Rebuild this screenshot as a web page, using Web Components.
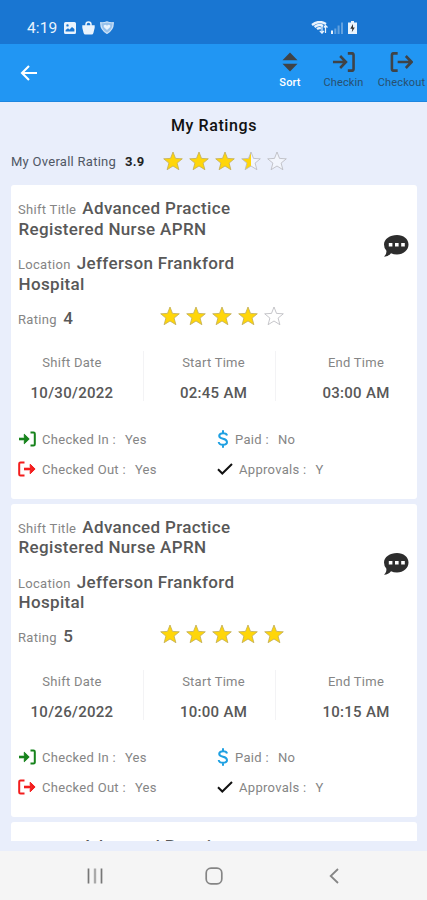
<!DOCTYPE html>
<html lang="en">
<head>
<meta charset="utf-8">
<title>My Ratings</title>
<style>
body{margin:0;font-family:Roboto,"Liberation Sans",sans-serif}
</style>
</head>
<body>
<ratings-app></ratings-app>
<script>
const ICONS = {
  back: ['0 0 18 18', '<path d="M17 9H2.5M9 2 2 9l7 7" fill="none" stroke="currentColor" stroke-width="2.1"/>'],
  image: ['0 0 12 12', '<path fill="currentColor" fill-rule="evenodd" d="M1.5 0h9Q12 0 12 1.500v9q0 1.500-1.500 1.500h-9Q0 12 0 10.500v-9Q0 0 1.500 0ZM1.600 9.600h8.800V7L8 5 5.500 7.600 4 6.200 1.600 8ZM3.500 2.200a1.200 1.200 0 1 0 0 2.400 1.200 1.200 0 0 0 0-2.400Z"/>'],
  bag: ['0 0 13 14', '<path d="M4 5V3.500Q4 1 6.500 1T9 3.500V5" fill="none" stroke="currentColor" stroke-width="1.500"/><path d="M.3 4.300h12.400v2.500L11.400 12q-.3 1.500-1.800 1.500H3.400Q2 13.500 1.600 12L.3 6.800Z" fill="currentColor"/>'],
  shield: ['0 0 14 14', '<path d="M7 .8Q10 2.200 13.300 1.800 13.600 9.500 7 13.400.4 9.500.7 1.800 4 2.200 7 .8Z" fill="currentColor" fill-opacity=".6" stroke="currentColor" stroke-opacity=".8" stroke-width="1.200"/><path d="M7 9.800 3.800 6.500Q3 4.500 5 4q1.300 0 2 1.200Q7.700 4 9 4q2 .5 1.200 2.500Z" fill="currentColor"/>'],
  wifi: ['0 0 17 13', '<path d="M1 4Q8-1.500 15 3M3.500 6Q8 2.500 12 5M6 8.200Q8 6.500 10 7.500" fill="none" stroke="currentColor" stroke-width="2.300"/><path d="M11 12V5M8.800 9.800l2.200 2.400 2-2.400M14.500 12V4.500M12.800 6.500l1.700-2 2 2" fill="none" stroke="currentColor" stroke-width="1.200"/>'],
  signal: ['0 0 12 12', '<path d="M0 8.500h2V12H0Z" fill="currentColor"/><path d="M3.300 6.500h2V12h-2ZM6.600 3.500h2V12h-2ZM10 .5h2V12h-2Z" fill="currentColor" fill-opacity=".35"/>'],
  battery: ['0 0 9 13', '<path d="M3 0h3v1.500h3V13H0V1.500h3Z" fill="currentColor"/><path d="M5 3 2.300 7.800h2L3.800 11.200l3-4.700H5Z" fill="#333"/>'],
  sort: ['0 0 16 20', '<path d="M8 .5 15.500 8.300H.5ZM8 19.500.5 11.700h15Z" fill="currentColor"/>'],
  enter: ['0 0 24 20', '<path d="M1 10h13M8.500 4l6 6-6 6M16.500 1.300h4q2 0 2 2v13.400q0 2-2 2h-4" fill="none" stroke="currentColor" stroke-width="2.700"/>'],
  exit: ['0 0 24 20', '<path d="M8 10h14M16.500 4l6 6-6 6M8 1.300H4q-2 0-2 2v13.400q0 2 2 2h4" fill="none" stroke="currentColor" stroke-width="2.700"/>'],
  enterSmall: ['0 0 18 16', '<path d="M1 8h6" stroke="currentColor" stroke-width="2.600"/><path d="M6.300 3.200 11.200 8l-4.900 4.800V9.600L8 8 6.300 6.400Z" fill="currentColor" stroke="currentColor"/><path d="M12.500 1.500h3q1.300 0 1.300 1.300v10.400q0 1.300-1.300 1.300h-3" fill="none" stroke="currentColor" stroke-width="2"/>'],
  exitSmall: ['0 0 18 16', '<path d="M6 8h7" stroke="currentColor" stroke-width="2.600"/><path d="M12.200 3.200 17.100 8l-4.900 4.800V9.600L13.900 8 12.200 6.400Z" fill="currentColor" stroke="currentColor"/><path d="M6.500 1.500h-4q-1.300 0-1.300 1.300v10.400q0 1.300 1.300 1.300h4" fill="none" stroke="currentColor" stroke-width="2"/>'],
  chat: ['0 0 26 24', '<path d="M14 1C20.500 1 25.500 5 25.500 10.500S20.500 20.500 14 20.500q-3.500 0-6-1.300-2.500 3.300-7 3.500 3-3 2.300-6.200Q1 14 1 10.500C1 5 7 1 14 1Z" fill="currentColor"/><path d="M5.800 9h3.600v3.600H5.800ZM12 9h3.600v3.600H12ZM18.200 9h3.600v3.600h-3.600Z" fill="#fff"/>'],
  dollar: ['0 0 12 18', '<path d="M10 5.500Q9.600 3.200 6 3.200T2.200 5.800Q2.200 8 6 8.800T10 12q0 2.800-4 2.800T1.700 12M6 .3v3M6 14.500v3.200" fill="none" stroke="currentColor" stroke-width="2"/>'],
  check: ['0 0 16 12', '<path d="m1 6.300 4.300 4.200L15 1" fill="none" stroke="currentColor" stroke-width="2"/>'],
  recents: ['0 0 16 16', '<path d="M1.500 .5v15M14.500 .5v15" fill="none" stroke="#777" stroke-width="1.700"/><path d="M8 .5v15" stroke="#aaa" stroke-width="2.400"/>'],
  home: ['0 0 18 18', '<rect x="1.200" y="1.200" width="15.600" height="15.600" rx="4.800" fill="none" stroke="currentColor" stroke-width="1.700"/>'],
  prev: ['0 0 10 16', '<path d="M9 1 1.700 8 9 15" fill="none" stroke="currentColor" stroke-width="1.800"/>']
};
const define = (name, html, render) => customElements.define(name, class extends HTMLElement {
  constructor() {
    super();
    const t = document.createElement('template');
    t.innerHTML = html;
    this.attachShadow({mode: 'open'}).append(t.content.cloneNode(true));
  }
  connectedCallback() { if (render) render(this, this.shadowRoot); }
});

define('ui-icon', `<style>:host{display:block;flex:none}svg{display:block;width:100%;height:100%}</style><svg preserveAspectRatio="none"></svg>`, (el, root) => {
  const [box, body] = ICONS[el.getAttribute('name')];
  const svg = root.querySelector('svg');
  svg.setAttribute('viewBox', box);
  svg.innerHTML = body;
});

define('star-rating', `<style>:host{display:flex;gap:6px}svg{display:block;width:20px;height:20px}</style>`, (el, root) => {
  const value = Number(el.getAttribute('value'));
  const star = 'M10 1 12.500 7.400 19.300 7.800 14.100 12.100 15.900 18.700 10 15 4.100 18.700 5.900 12.100 .7 7.800 7.500 7.400Z';
  for (let i = 0; i < 5; i++) {
    const part = Math.max(0, Math.min(1, value - i));
    root.innerHTML += `<svg viewBox="0 0 20 20"><defs><clipPath id="c${i}"><rect width="${part * 20}" height="20"/></clipPath></defs><path d="${star}" fill="#fff" fill-opacity=".4"/><path d="${star}" fill="#ffd60a" clip-path="url(#c${i})"/><path d="${star}" fill="none" stroke="${part === 1 ? '#c0ac55' : '#b8b8bc'}" stroke-width=".8"/></svg>`;
  }
});

define('status-bar', `<style>
:host{display:flex;align-items:center;box-sizing:border-box;height:44px;padding:11px 70px 0 27px;background:#1976d2;color:#e9f3fd}
.time{font-size:15.500px;width:37px;letter-spacing:.1px}
.grow{flex:1}
.i1{width:12px;height:12px}.i2{width:13px;height:14px;margin-left:6px}.i3{width:14px;height:13px;margin-left:5px}
.w{width:17px;height:13px}.s{width:12px;height:12px;margin:0 5px 0 3px}.b{width:9px;height:13px}
</style><span class="time">4:19</span><ui-icon class="i1" name="image"></ui-icon><ui-icon class="i2" name="bag"></ui-icon><ui-icon class="i3" name="shield"></ui-icon><span class="grow"></span><ui-icon class="w" name="wifi"></ui-icon><ui-icon class="s" name="signal"></ui-icon><ui-icon class="b" name="battery"></ui-icon>`);

define('bar-action', `<style>
:host{display:flex;flex-direction:column;align-items:center;color:#3f4347;padding-top:8px;width:54px}
.box{height:20px}
.label{font-size:11px;line-height:14px;margin-top:4px;color:var(--label,#28506f);white-space:nowrap;letter-spacing:.15px;font-weight:var(--w,400)}
</style><div class="box"><slot name="icon"></slot></div><span class="label"><slot></slot></span>`);

define('app-bar', `<style>
:host{display:flex;justify-content:space-between;box-sizing:border-box;height:58px;padding-left:20px;background:#2196f3;border-bottom:1px solid #1c86e0;color:#fff}
.back{width:18px;height:18px;margin-top:20px}
.actions{display:flex;margin-right:-1.500px}
.sort{width:16px;height:20px}.arrow{width:23px;height:20px}
.a{--label:#fff;--w:500;margin-right:-.5px}.c{margin-right:4px}
</style><ui-icon class="back" name="back"></ui-icon><div class="actions">
<bar-action class="a">Sort<ui-icon slot="icon" class="sort" name="sort"></ui-icon></bar-action>
<bar-action class="c">Checkin<ui-icon slot="icon" class="arrow" name="enter"></ui-icon></bar-action>
<bar-action>Checkout<ui-icon slot="icon" class="arrow" name="exit"></ui-icon></bar-action></div>`);

define('time-cell', `<style>
:host{display:flex;flex-direction:column;align-items:center;box-sizing:border-box;height:50px}
.k{font-size:13px;line-height:16px;margin-top:4px;color:#858585;letter-spacing:.25px}
.v{font-size:15px;line-height:18px;margin-top:13px;color:#585858;font-weight:500;letter-spacing:.3px;white-space:nowrap}
</style><span class="k"><slot name="key"></slot></span><span class="v"><slot></slot></span>`);

define('check-item', `<style>
:host{display:flex;align-items:center;height:20px;font-size:13px;color:#858585;letter-spacing:.3px;white-space:nowrap}
.text{padding-top:1px}.v{margin-left:9px}
</style><slot name="icon"></slot><span class="text"><slot></slot><span class="v"><slot name="value"></slot></span></span>`);

define('shift-card', `<style>
:host{display:block;box-sizing:border-box;height:313.500px;margin-bottom:5px;padding:15px 7px 0;background:#fff;border-radius:3px;color:#858585}
.top{display:grid;grid-template-columns:1fr 27px;align-items:center;height:96px}
p{margin:0;width:235px;font-size:13px;line-height:20.500px;letter-spacing:.3px;white-space:nowrap}
p+p{margin-top:14px}
b{font-size:17px;line-height:1;font-weight:500;color:#585858;letter-spacing:.35px;margin-left:2.500px}
b.next{margin-left:.5px}
.chat{width:26px;height:24px;margin-top:-5px}
.rate{display:flex;align-items:center;height:24px;margin-top:10px;font-size:13px;letter-spacing:.3px}
.rate .k{width:142px}
.rate b{margin-left:3px}
.rate star-rating{margin-top:-5px}
.times{display:grid;grid-template-columns:125px 132px 1fr;margin-top:21.400px}
.times>*+*{border-left:1px solid #f3f3f5}
.d1{padding-right:17px}.d2{padding-left:8px}.d3{padding-left:26px}
.checks{display:grid;grid-template-columns:199px 1fr;row-gap:10px;margin-top:27.200px}
.in,.out{width:18px;height:16px;margin-right:6px}
.in{color:#17831c}.out{color:#f31d1d}
.paid{width:12px;height:18px;margin-right:6px;color:#1ea0e2}
.ok{width:16px;height:12px;margin-right:6px;color:#111}
</style>
<div class="top"><div><p>Shift Title <b>Advanced Practice</b><br><b class="next">Registered Nurse APRN</b></p><p>Location <b>Jefferson Frankford</b><br><b class="next">Hospital</b></p></div><ui-icon class="chat" name="chat" style="color:#2d2d2d"></ui-icon></div>
<div class="rate"><span class="k">Rating <b id="r"></b></span><star-rating id="s"></star-rating></div>
<div class="times"><time-cell class="d1"><span slot="key">Shift Date</span><slot name="date"></slot></time-cell><time-cell class="d2"><span slot="key">Start Time</span><slot name="start"></slot></time-cell><time-cell class="d3"><span slot="key">End Time</span><slot name="end"></slot></time-cell></div>
<div class="checks">
<check-item><ui-icon slot="icon" class="in" name="enterSmall"></ui-icon>Checked In :<span slot="value">Yes</span></check-item>
<check-item><ui-icon slot="icon" class="paid" name="dollar"></ui-icon>Paid :<span slot="value">No</span></check-item>
<check-item><ui-icon slot="icon" class="out" name="exitSmall"></ui-icon>Checked Out :<span slot="value">Yes</span></check-item>
<check-item><ui-icon slot="icon" class="ok" name="check"></ui-icon>Approvals :<span slot="value">Y</span></check-item>
</div>`, (el, root) => {
  root.getElementById('r').textContent = el.getAttribute('rating');
  const s = document.createElement('star-rating');
  s.setAttribute('value', el.getAttribute('rating'));
  root.getElementById('s').replaceWith(s);
});

define('card-peek', `<style>
:host{display:block;height:19px;overflow:hidden;background:#fff;border-radius:3px 3px 0 0;padding:0 7px}
p{margin:14px 0 0;font-size:17px;font-weight:500;line-height:20.500px;letter-spacing:.35px;color:#585858;padding-left:64px}
</style><p>Advanced Practice</p>`);

define('nav-bar', `<style>
:host{display:flex;align-items:center;justify-content:space-between;box-sizing:border-box;height:49px;padding:0 88px 0 87px;background:#f5f5f5;color:#858585}
.r{width:16px;height:16px}.h{width:18px;height:18px;margin-right:4px}.p{width:10px;height:16px}
</style><ui-icon class="r" name="recents"></ui-icon><ui-icon class="h" name="home"></ui-icon><ui-icon class="p" name="prev"></ui-icon>`);

define('ratings-app', `<style>
:host{display:flex;flex-direction:column;height:900px;overflow:hidden;background:#e9eefb}
h1{margin:14px 0 0;font-size:16px;line-height:20px;font-weight:500;letter-spacing:.6px;text-indent:1px;text-align:center;color:#111}
.overall{display:flex;align-items:center;height:22px;margin:14px 11px 0;font-size:13px;color:#505764}
.overall .k{width:114px;letter-spacing:.27px}.overall b{font-weight:700;color:#222;width:37.500px;letter-spacing:.3px}
main{height:656px;overflow:hidden;margin:13px 10px 10px 11px}
</style>
<status-bar></status-bar><app-bar></app-bar>
<h1>My Ratings</h1>
<div class="overall"><span class="k">My Overall Rating</span><b>3.9</b><star-rating value="3.5"></star-rating></div>
<main>
<shift-card rating="4"><span slot="date">10/30/2022</span><span slot="start">02:45 AM</span><span slot="end">03:00 AM</span></shift-card>
<shift-card rating="5"><span slot="date">10/26/2022</span><span slot="start">10:00 AM</span><span slot="end">10:15 AM</span></shift-card>
<card-peek></card-peek>
</main>
<nav-bar></nav-bar>`);
</script>
</body>
</html>
